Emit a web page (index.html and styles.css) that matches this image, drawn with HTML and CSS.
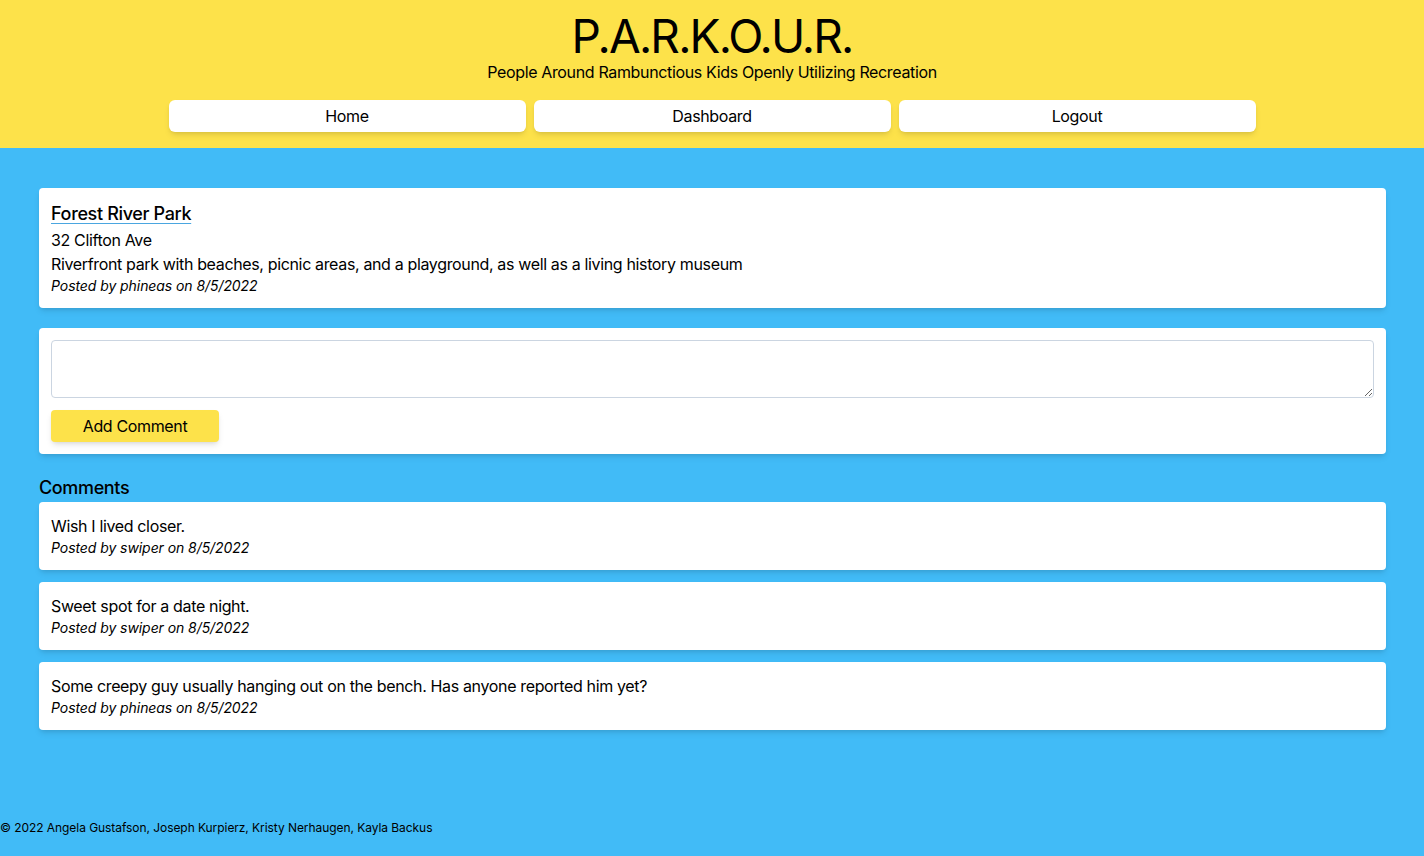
FILE: index.html
```html
<!DOCTYPE html>
<html lang="en">
<head>
<meta charset="utf-8">
<title>P.A.R.K.O.U.R.</title>
<link rel="stylesheet" href="styles.css">
</head>
<body>
<div class="page">
  <header class="header">
    <h1 class="title">P.A.R.K.O.U.R.</h1>
    <p class="subtitle">People Around Rambunctious Kids Openly Utilizing Recreation</p>
    <nav class="nav">
      <a class="nav-btn" href="#">Home</a>
      <a class="nav-btn" href="#">Dashboard</a>
      <a class="nav-btn" href="#">Logout</a>
    </nav>
  </header>
  <main class="main">
    <section class="card">
      <a class="park-name" href="#">Forest River Park</a>
      <p class="line">32 Clifton Ave</p>
      <p class="line">Riverfront park with beaches, picnic areas, and a playground, as well as a living history museum</p>
      <p class="meta">Posted by phineas on 8/5/2022</p>
    </section>
    <form class="card comment-form">
      <textarea class="comment-input" rows="2"></textarea>
      <button class="add-btn" type="button">Add Comment</button>
    </form>
    <h2 class="comments-title">Comments</h2>
    <div class="comments">
      <div class="card">
        <p class="line">Wish I lived closer.</p>
        <p class="meta">Posted by swiper on 8/5/2022</p>
      </div>
      <div class="card">
        <p class="line">Sweet spot for a date night.</p>
        <p class="meta">Posted by swiper on 8/5/2022</p>
      </div>
      <div class="card">
        <p class="line">Some creepy guy usually hanging out on the bench. Has anyone reported him yet?</p>
        <p class="meta">Posted by phineas on 8/5/2022</p>
      </div>
    </div>
  </main>
  <footer class="footer">© 2022 Angela Gustafson, Joseph Kurpierz, Kristy Nerhaugen, Kayla Backus</footer>
</div>
</body>
</html>
```
FILE: styles.css
```css
* { box-sizing: border-box; }
html, body { margin: 0; padding: 0; }
body {
  font-family: Inter, "Noto Sans", "Liberation Sans", sans-serif;
  color: #000;
  background: #41bbf7;
  letter-spacing: -0.022em;
}
.page {
  min-height: 100vh;
  display: flex;
  flex-direction: column;
}
.header {
  background: #fde24a;
  padding: 13px 0 16px;
  display: flex;
  flex-direction: column;
  align-items: center;
}
.title {
  margin: 0;
  font-size: 46px;
  line-height: 47px;
  font-weight: 400;
  letter-spacing: -1.8px;
}
.subtitle {
  margin: 0;
  font-size: 16px;
  line-height: 24px;
}
.nav {
  margin-top: 16px;
  display: flex;
  gap: 8px;
}
.nav-btn {
  width: 357px;
  height: 32px;
  background: #fff;
  border-radius: 6px;
  color: #000;
  text-decoration: none;
  font-size: 16px;
  line-height: 32px;
  text-align: center;
  box-shadow: 0 4px 6px -1px rgba(0,0,0,0.1), 0 2px 4px -2px rgba(0,0,0,0.1);
}
.main {
  padding: 40px 38px 0 39px;
  display: flex;
  flex-direction: column;
}
.card {
  background: #fff;
  border-radius: 4px;
  padding: 12px;
  box-shadow: 0 4px 6px -1px rgba(0,0,0,0.1), 0 2px 4px -2px rgba(0,0,0,0.1);
}
.park-name {
  display: block;
  color: #000;
  font-size: 18px;
  line-height: 28px;
  font-weight: 500;
  text-decoration: underline;
  text-decoration-color: #4aa6e0;
  text-decoration-thickness: 1px;
  text-underline-offset: 3px;
}
.line {
  margin: 0;
  font-size: 16px;
  line-height: 24px;
}
.meta {
  margin: 0;
  font-size: 14px;
  line-height: 20px;
  font-style: italic;
  letter-spacing: -0.005em;
}
.comment-form {
  margin-top: 20px;
  display: flex;
  flex-direction: column;
  align-items: flex-start;
}
.comment-input {
  width: 100%;
  height: 58px;
  border: 1px solid #cbd5e1;
  border-radius: 4px;
  padding: 4px 8px;
  font-family: inherit;
  font-size: 16px;
  resize: vertical;
}
.add-btn {
  margin-top: 12px;
  width: 168px;
  height: 32px;
  background: #fde24a;
  border: none;
  border-radius: 4px;
  font-family: inherit;
  font-size: 16px;
  letter-spacing: -0.022em;
  color: #000;
  box-shadow: 0 4px 6px -1px rgba(0,0,0,0.1), 0 2px 4px -2px rgba(0,0,0,0.1);
}
.comments-title {
  margin: 20px 0 0;
  font-size: 18px;
  line-height: 28px;
  font-weight: 500;
}
.comments {
  display: flex;
  flex-direction: column;
  gap: 12px;
}
.footer {
  margin-top: auto;
  padding-bottom: 20px;
  font-size: 12px;
  line-height: 16px;
  letter-spacing: -0.005em;
}
```
